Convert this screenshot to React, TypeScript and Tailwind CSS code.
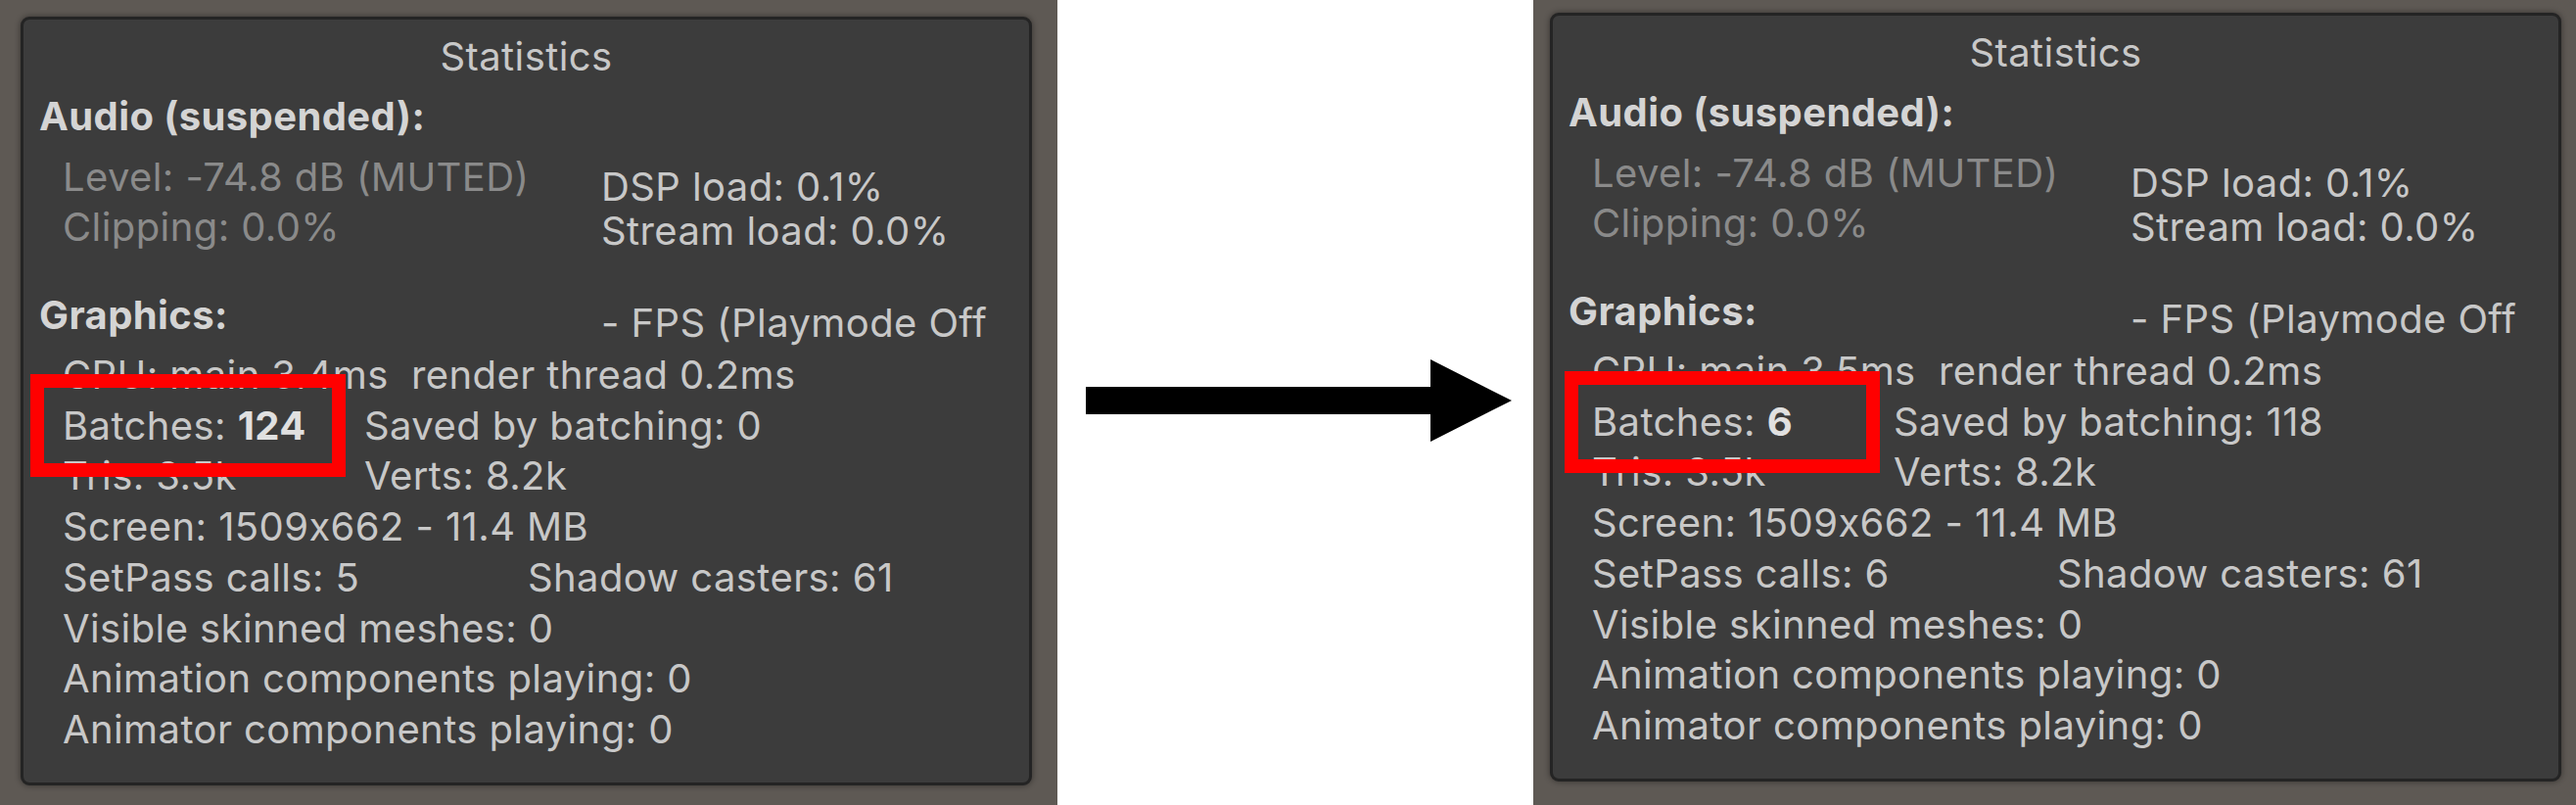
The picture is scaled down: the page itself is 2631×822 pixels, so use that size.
type Stats = {
    cpu: string;
    batches: string;
    saved: string;
    setPass: string;
};

function StatsPanel({ s, boxClass }: { s: Stats; boxClass: string }) {
    return (
        <div className="relative h-[785px] w-[1033px] rounded-[9px] border-[3px] border-[#242424] bg-[#3c3c3c] text-[40px] tracking-[0.4px] text-[#c8c8c8] shadow-[0_0_6px_rgba(0,0,0,0.45)] [font-feature-settings:'calt'_0]">
            <div className="pt-[12px] text-center leading-[52px]">Statistics</div>
            <div className="mt-[9px] pl-[16px] font-bold leading-[52px] text-[#d4d4d4]">Audio (suspended):</div>

            <div className="mt-[7px] flex pl-[40px]">
                <div className="w-[550px] pt-[3px] leading-[51px] text-[#8a8a8a]">
                    <div>Level: -74.8 dB (MUTED)</div>
                    <div>Clipping: 0.0%</div>
                </div>
                <div className="pt-[16px] leading-[45px]">
                    <div>DSP load: 0.1%</div>
                    <div>Stream load: 0.0%</div>
                </div>
            </div>

            <div className="mt-[38px] flex h-[52px] items-start pl-[16px] leading-[52px]">
                <div className="w-[574px] font-bold text-[#d4d4d4]">Graphics:</div>
                <div className="mt-[8px] w-[394px] overflow-hidden whitespace-nowrap">- FPS (Playmode Off)</div>
            </div>

            <div className="mt-[9px] pl-[40px] leading-[51.7px]">
                <div className="whitespace-pre">{s.cpu}</div>
                <div className="flex">
                    <div className="w-[308px]">
                        Batches: <span className="font-bold text-[#e0e0e0]">{s.batches}</span>
                    </div>
                    <div>Saved by batching: {s.saved}</div>
                </div>
                <div className="flex">
                    <div className="w-[308px]">Tris: 3.5k</div>
                    <div>Verts: 8.2k</div>
                </div>
                <div>Screen: 1509x662 - 11.4 MB</div>
                <div className="flex">
                    <div className="w-[475px]">SetPass calls: {s.setPass}</div>
                    <div>Shadow casters: 61</div>
                </div>
                <div>Visible skinned meshes: 0</div>
                <div>Animation components playing: 0</div>
                <div>Animator components playing: 0</div>
            </div>

            <div className={boxClass} />
        </div>
    );
}

export default function App() {
    return (
        <div className="flex h-[822px] w-[2631px] bg-white font-[Inter,sans-serif]">
            <div className="h-full w-[1080px] bg-[#5e5954] pl-[21px] pt-[17px]">
                <StatsPanel
                    s={{ cpu: 'CPU: main 3.4ms  render thread 0.2ms', batches: '124', saved: '0', setPass: '5' }}
                    boxClass="absolute left-[7px] top-[362px] h-[105px] w-[322px] border-[14px] border-[#ff0000]"
                />
            </div>

            <div className="h-full w-[486px] pl-[29px] pt-[367px]">
                <svg width="435" height="84" viewBox="0 0 435 84">
                    <rect x="0" y="28" width="353" height="28" fill="#000" />
                    <polygon points="352,0 435,42 352,84" fill="#000" />
                </svg>
            </div>

            <div className="h-full w-[1065px] bg-[#5e5954] pl-[17px] pt-[13px]">
                <StatsPanel
                    s={{ cpu: 'CPU: main 3.5ms  render thread 0.2ms', batches: '6', saved: '118', setPass: '6' }}
                    boxClass="absolute left-[12px] top-[363px] h-[104px] w-[322px] border-[14px] border-[#ff0000]"
                />
            </div>
        </div>
    );
}
